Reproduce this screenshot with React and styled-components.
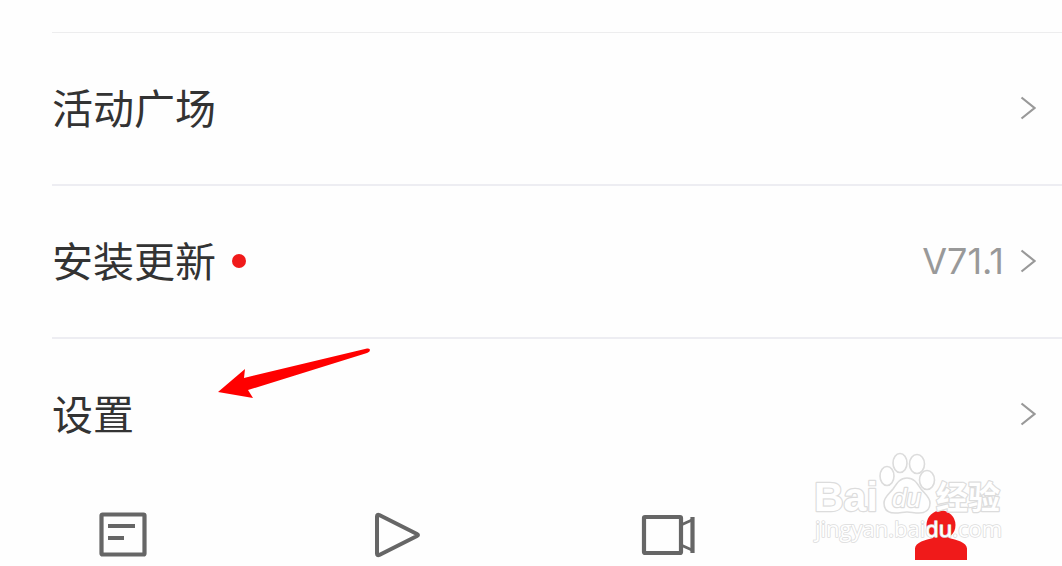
import React, { useState } from "react";
import styled, { createGlobalStyle } from "styled-components";

const GlobalStyle = createGlobalStyle`
  * {
    box-sizing: border-box;
  }
  body {
    margin: 0;
    background-color: #fefefe;
    font-family: Inter, "Noto Sans CJK SC", sans-serif;
  }
`;

const Page = styled.main`
  position: relative;
  width: 100%;
  padding-top: 32px;
  overflow: hidden;
`;

const List = styled.ul`
  margin: 0;
  padding: 0 0 0 52px;
  list-style: none;
`;

const ListItem = styled.li`
  position: relative;
  border-top: 2px solid #ededf2;

  &:first-child {
    border-top: 1px solid #ededee;
  }
`;

const Row = styled.button`
  width: 100%;
  height: 151px;
  padding: 0 26px 2px 0;
  border: 0;
  background: none;
  display: flex;
  align-items: center;
  gap: 16px;
  font-family: inherit;
  text-align: left;
  cursor: pointer;
`;

const Label = styled.span`
  padding-bottom: 4px;
  font-family: "Noto Sans CJK SC", sans-serif;
  font-size: 41px;
  font-weight: 400;
  line-height: 60px;
  color: #333;
`;

const Dot = styled.span`
  width: 14px;
  height: 14px;
  border-radius: 50%;
  background-color: #f01a1a;
`;

const Value = styled.span`
  margin-left: auto;
  font-size: 36px;
  font-weight: 400;
  line-height: 48px;
  color: #999;
`;

const Chevron = styled.svg`
  width: 16px;
  height: 24px;
  flex: none;

  ${Label} + & {
    margin-left: auto;
  }
`;

const Pointer = styled.svg`
  position: absolute;
  left: 164px;
  top: 4px;
  width: 158px;
  height: 60px;
  pointer-events: none;
`;

const TabBar = styled.nav`
  display: flex;
  justify-content: space-between;
  padding: 16px 93px 4px 94px;
`;

const Tab = styled.button`
  width: 56px;
  height: 56px;
  padding: 0;
  border: 0;
  background: none;
  color: ${(props) => (props.$active ? "#f01a1a" : "#666")};
  cursor: pointer;

  svg {
    display: block;
  }
`;

const Watermark = styled.svg`
  position: absolute;
  right: 52px;
  bottom: 16px;
  width: 200px;
  height: 104px;
  pointer-events: none;
`;

const rows = [
  { label: "活动广场" },
  { label: "安装更新", isNew: true, value: "V71.1" },
  { label: "设置", pointed: true },
];

const NewsIcon = () => (
  <svg width="56" height="56" fill="none" stroke="currentColor">
    <rect x="7.5" y="8.5" width="43" height="40" rx="1" strokeWidth="4.2" />
    <path d="M14 20h27M14 32h16" strokeWidth="4.2" />
  </svg>
);

const PlayIcon = () => (
  <svg width="56" height="56" fill="none" stroke="currentColor">
    <path
      d="M10 10.5Q10 8 12.3 9L50 28Q52 29 50 30L12.3 49Q10 50 10 47.5Z"
      strokeWidth="4"
      strokeLinejoin="round"
    />
  </svg>
);

const VideoIcon = () => (
  <svg width="56" height="56" fill="none" stroke="currentColor">
    <rect x="4" y="11" width="37" height="36" rx="1" strokeWidth="4.2" />
    <path d="M42 18.5L52 14M42 39.5L52 44" strokeWidth="3" />
    <path d="M52.5 11v36" strokeWidth="4.2" />
  </svg>
);

const UserIcon = () => (
  <svg width="56" height="56" fill="currentColor">
    <circle cx="28" cy="19" r="14.5" />
    <path d="M20 26h16v6c7 1.5 18 4.5 18 10.5V54H2V42.5c0-6 11-9 18-10.5z" />
  </svg>
);

const tabs = [
  { id: "news", name: "新闻", Icon: NewsIcon },
  { id: "play", name: "播放", Icon: PlayIcon },
  { id: "video", name: "视频", Icon: VideoIcon },
  { id: "mine", name: "我的", Icon: UserIcon },
];

function BaiduMark() {
  return (
    <Watermark viewBox="0 0 200 104" aria-hidden="true">
      <g fill="#fff" stroke="#dcdcdc" strokeWidth="1.6">
        <ellipse cx="77" cy="30" rx="7" ry="9.5" />
        <ellipse cx="90" cy="17" rx="7" ry="9.5" />
        <ellipse cx="107" cy="18" rx="7.5" ry="9.5" />
        <ellipse cx="117" cy="34" rx="7.5" ry="9.5" />
        <path d="M97 32c-7 0-10 5-14 11-4 5-9 8-9 14 0 8 6 10 11 10 5 0 8-1 12-1s7 1 12 1c6 0 11-3 11-10 0-6-5-9-9-14-4-6-7-11-14-11z" />
        <g
          fontWeight="700"
          fontFamily='"Liberation Sans", sans-serif'
          strokeWidth="2.4"
          paintOrder="stroke"
          strokeLinejoin="round"
        >
          <text x="4" y="65" fontSize="41">
            Bai
          </text>
          <text x="82" y="61" fontSize="26" fontStyle="italic" fontWeight="400">
            du
          </text>
          <text
            x="126"
            y="63"
            fontSize="32"
            fontFamily='"Noto Sans CJK SC", sans-serif'
          >
            经验
          </text>
        </g>
        <text
          x="5"
          y="91"
          fontSize="22"
          fontFamily='"Open Sans", sans-serif'
          strokeWidth="1.6"
          paintOrder="stroke"
          strokeLinejoin="round"
        >
          jingyan.baidu.com
        </text>
      </g>
    </Watermark>
  );
}

export default function App() {
  const [activeTab, setActiveTab] = useState("mine");

  return (
    <Page>
      <GlobalStyle />
      <List>
        {rows.map((row) => (
          <ListItem key={row.label}>
            <Row type="button">
              <Label>{row.label}</Label>
              {row.isNew && <Dot />}
              {row.value && <Value>{row.value}</Value>}
              <Chevron viewBox="0 0 16 24" fill="none" stroke="#999">
                <path d="M1.5 1.5L14.5 12L1.5 22.5" strokeWidth="2.2" />
              </Chevron>
            </Row>
            {row.pointed && (
              <Pointer viewBox="0 0 158 60" fill="#f00">
                <path d="M2 49L29 26L28 35L151 5.5Q154 5 154 7Q154 9 151 10L32 47L37 55Z" />
              </Pointer>
            )}
          </ListItem>
        ))}
      </List>
      <TabBar>
        {tabs.map(({ id, name, Icon }) => (
          <Tab
            key={id}
            type="button"
            aria-label={name}
            $active={id === activeTab}
            onClick={() => setActiveTab(id)}
          >
            <Icon />
          </Tab>
        ))}
      </TabBar>
      <BaiduMark />
    </Page>
  );
}
